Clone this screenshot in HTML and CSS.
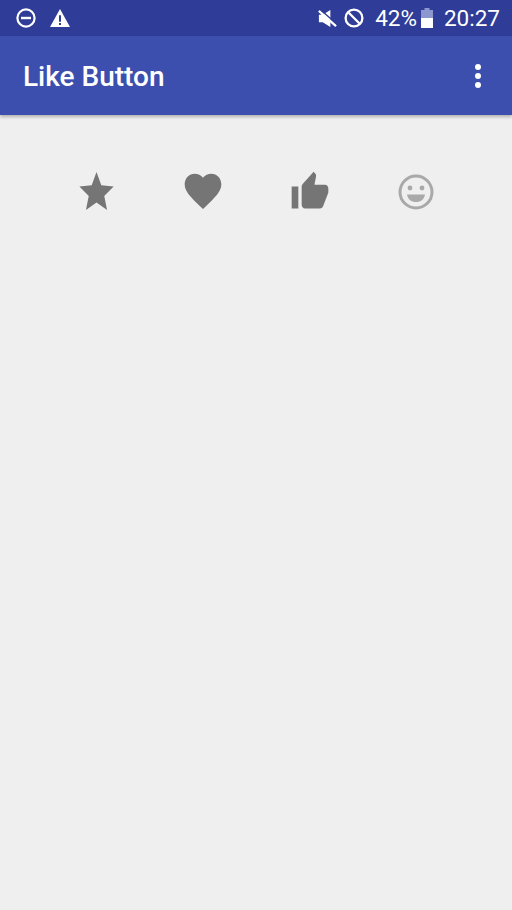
FILE: index.html
```html
<!DOCTYPE html>
<html lang="en">
<head>
<meta charset="utf-8">
<title>Like Button</title>
<link rel="stylesheet" href="styles.css">
</head>
<body>
<div class="status">
  <div class="status-left">
    <svg class="ic-dnd" viewBox="0 0 22 22"><circle cx="11" cy="11" r="8.600" fill="none" stroke="#fff" stroke-width="2.2"/><rect x="6" y="9.800" width="10" height="2.400" fill="#fff"/></svg>
    <svg class="ic-warn" viewBox="0 0 24 22"><path d="M12 1 23 21H1z M10.900 8v7h2.200V8z M10.900 16.400v2.400h2.200v-2.400z" fill="#fff" fill-rule="evenodd"/></svg>
  </div>
  <div class="status-right">
    <svg class="ic-mute" viewBox="0 0 22 22"><path d="M2 7h4l8-5v18l-8-5H2z" fill="#fff"/><path d="M2 3 20 19" stroke="#fff" stroke-width="2.600"/><path d="M3.500 1.500 21.500 17.500" stroke="#2f3c98" stroke-width="1.400"/></svg>
    <svg class="ic-block" viewBox="0 0 22 22"><circle cx="11" cy="11" r="8.400" fill="none" stroke="#fff" stroke-width="2.300"/><path d="M5 5 17 17" stroke="#fff" stroke-width="2.300"/></svg>
    <span class="pct">42%</span>
    <svg class="ic-batt" viewBox="0 0 14 20"><path d="M4.500 0h5v2H13v18H1V2h3.500z" fill="#8d97cf"/><rect x="1" y="10" width="12" height="10" fill="#fff"/></svg>
    <span class="clock">20:27</span>
  </div>
</div>
<header class="appbar">
  <h1 class="title">Like Button</h1>
  <div class="overflow"><i class="dot"></i><i class="dot"></i><i class="dot"></i></div>
</header>
<main class="content">
  <div class="cell"><svg class="ic-star" viewBox="0 0 24 24" preserveAspectRatio="none"><path d="M12 17.270 18.180 21l-1.640-7.030L22 9.240l-7.190-.61L12 2 9.190 8.630 2 9.240l5.460 4.730L5.820 21z"/></svg></div>
  <div class="cell"><svg class="ic-heart" viewBox="0 0 24 24" preserveAspectRatio="none"><path d="M12 21.350l-1.450-1.320C5.400 15.360 2 12.280 2 8.500 2 5.420 4.420 3 7.500 3c1.740 0 3.410.81 4.500 2.090C13.090 3.810 14.760 3 16.500 3 19.580 3 22 5.420 22 8.500c0 3.780-3.400 6.860-8.550 11.540L12 21.350z"/></svg></div>
  <div class="cell"><svg class="ic-thumb" viewBox="0 0 24 24" preserveAspectRatio="none"><path d="M1 21h4V9H1v12zm22-11c0-1.100-.9-2-2-2h-6.310l.95-4.570.03-.32c0-.41-.17-.79-.44-1.060L14.170 1 7.590 7.590C7.220 7.950 7 8.450 7 9v10c0 1.100.9 2 2 2h9c.83 0 1.540-.5 1.840-1.220l3.020-7.050c.09-.23.14-.47.14-.73v-2z"/></svg></div>
  <div class="cell"><svg class="ic-smile" viewBox="0 0 36 36"><circle cx="18" cy="18" r="16" fill="none" stroke="#a9a9a9" stroke-width="3"/><circle cx="12" cy="14" r="2.400" fill="#a9a9a9"/><circle cx="24" cy="14" r="2.400" fill="#a9a9a9"/><path d="M9 20.500h18c-.8 5-4.400 7.500-9 7.500s-8.200-2.500-9-7.500z" fill="#a9a9a9"/></svg></div>
</main>
</body>
</html>
```
FILE: styles.css
```css
* { box-sizing: border-box; }
html, body { margin: 0; height: 100%; }
body {
  width: 512px;
  height: 910px;
  overflow: hidden;
  background: #efefef;
  font-family: Roboto, "Liberation Sans", sans-serif;
  color: #fff;
}
svg { display: block; flex: none; }

.status {
  height: 36px;
  background: #2f3c98;
  display: flex;
  align-items: center;
  justify-content: space-between;
  padding: 0 12px 0 15px;
}
.status-left, .status-right { display: flex; align-items: center; }
.ic-dnd { width: 22px; height: 22px; }
.ic-warn { width: 22px; height: 20px; margin-left: 12px; }
.ic-mute { width: 21px; height: 21px; }
.ic-block { width: 22px; height: 22px; margin-left: 5px; }
.pct { font-size: 22.5px; margin-left: 10px; }
.ic-batt { width: 14px; height: 20px; margin-left: 3px; }
.clock { font-size: 22.5px; margin-left: 10px; }

.appbar {
  height: 79px;
  background: #3c4fae;
  display: flex;
  align-items: center;
  justify-content: space-between;
  padding: 0 31px 0 23px;
  box-shadow: 0 2px 3px rgba(0, 0, 0, 0.25);
}
.title { margin: 2px 0 0; font-size: 28px; font-weight: 500; }
.overflow { display: flex; flex-direction: column; gap: 3px; }
.dot { display: block; width: 6px; height: 6px; border-radius: 50%; background: #fff; }

.content {
  display: grid;
  grid-template-columns: repeat(4, 107px);
  padding: 53px 0 0 42px;
}
.cell { height: 48px; display: flex; align-items: center; justify-content: center; }
.cell svg { fill: #757575; }
.ic-star { width: 41px; height: 48px; margin-left: 1px; }
.ic-heart { width: 44px; height: 46px; margin-top: -2px; }
.ic-thumb { width: 40px; height: 44px; }
.ic-smile { width: 36px; height: 36px; margin-left: -2px; margin-top: -1px; }
```
